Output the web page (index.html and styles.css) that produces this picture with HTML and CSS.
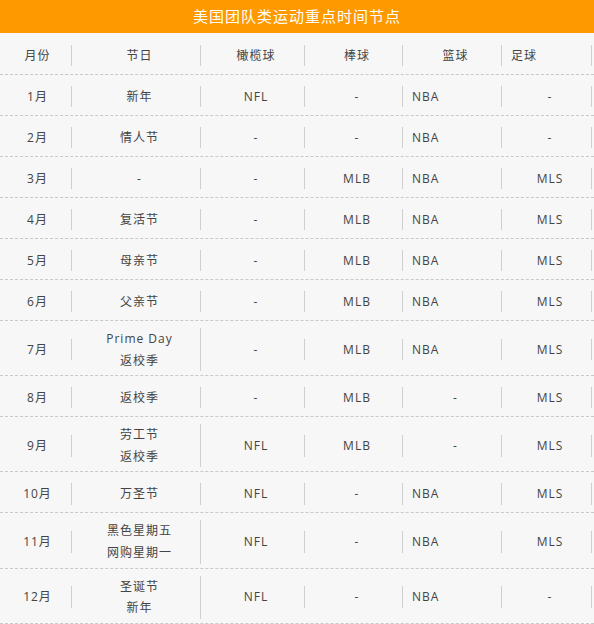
FILE: index.html
```html
<!DOCTYPE html>
<html lang="zh-CN">
<head>
<meta charset="utf-8">
<title>美国团队类运动重点时间节点</title>
<link rel="stylesheet" href="styles.css">
</head>
<body>
<div class="title">美国团队类运动重点时间节点</div>
<div class="table">
  <div class="row head">
    <div class="cell"><div class="in">月份</div></div>
    <div class="cell"><div class="in">节日</div></div>
    <div class="cell"><div class="in">橄榄球</div></div>
    <div class="cell"><div class="in">棒球</div></div>
    <div class="cell"><div class="in">篮球</div></div>
    <div class="cell"><div class="in left">足球</div></div>
  </div>
  <div class="row">
    <div class="cell"><div class="in">1月</div></div>
    <div class="cell"><div class="in">新年</div></div>
    <div class="cell"><div class="in">NFL</div></div>
    <div class="cell"><div class="in">-</div></div>
    <div class="cell"><div class="in left">NBA</div></div>
    <div class="cell"><div class="in">-</div></div>
  </div>
  <div class="row">
    <div class="cell"><div class="in">2月</div></div>
    <div class="cell"><div class="in">情人节</div></div>
    <div class="cell"><div class="in">-</div></div>
    <div class="cell"><div class="in">-</div></div>
    <div class="cell"><div class="in left">NBA</div></div>
    <div class="cell"><div class="in">-</div></div>
  </div>
  <div class="row">
    <div class="cell"><div class="in">3月</div></div>
    <div class="cell"><div class="in">-</div></div>
    <div class="cell"><div class="in">-</div></div>
    <div class="cell"><div class="in">MLB</div></div>
    <div class="cell"><div class="in left">NBA</div></div>
    <div class="cell"><div class="in">MLS</div></div>
  </div>
  <div class="row">
    <div class="cell"><div class="in">4月</div></div>
    <div class="cell"><div class="in">复活节</div></div>
    <div class="cell"><div class="in">-</div></div>
    <div class="cell"><div class="in">MLB</div></div>
    <div class="cell"><div class="in left">NBA</div></div>
    <div class="cell"><div class="in">MLS</div></div>
  </div>
  <div class="row">
    <div class="cell"><div class="in">5月</div></div>
    <div class="cell"><div class="in">母亲节</div></div>
    <div class="cell"><div class="in">-</div></div>
    <div class="cell"><div class="in">MLB</div></div>
    <div class="cell"><div class="in left">NBA</div></div>
    <div class="cell"><div class="in">MLS</div></div>
  </div>
  <div class="row">
    <div class="cell"><div class="in">6月</div></div>
    <div class="cell"><div class="in">父亲节</div></div>
    <div class="cell"><div class="in">-</div></div>
    <div class="cell"><div class="in">MLB</div></div>
    <div class="cell"><div class="in left">NBA</div></div>
    <div class="cell"><div class="in">MLS</div></div>
  </div>
  <div class="row">
    <div class="cell"><div class="in">7月</div></div>
    <div class="cell"><div class="in">Prime Day<br>返校季</div></div>
    <div class="cell"><div class="in">-</div></div>
    <div class="cell"><div class="in">MLB</div></div>
    <div class="cell"><div class="in left">NBA</div></div>
    <div class="cell"><div class="in">MLS</div></div>
  </div>
  <div class="row">
    <div class="cell"><div class="in">8月</div></div>
    <div class="cell"><div class="in">返校季</div></div>
    <div class="cell"><div class="in">-</div></div>
    <div class="cell"><div class="in">MLB</div></div>
    <div class="cell"><div class="in">-</div></div>
    <div class="cell"><div class="in">MLS</div></div>
  </div>
  <div class="row">
    <div class="cell"><div class="in">9月</div></div>
    <div class="cell"><div class="in">劳工节<br>返校季</div></div>
    <div class="cell"><div class="in">NFL</div></div>
    <div class="cell"><div class="in">MLB</div></div>
    <div class="cell"><div class="in">-</div></div>
    <div class="cell"><div class="in">MLS</div></div>
  </div>
  <div class="row">
    <div class="cell"><div class="in">10月</div></div>
    <div class="cell"><div class="in">万圣节</div></div>
    <div class="cell"><div class="in">NFL</div></div>
    <div class="cell"><div class="in">-</div></div>
    <div class="cell"><div class="in left">NBA</div></div>
    <div class="cell"><div class="in">MLS</div></div>
  </div>
  <div class="row">
    <div class="cell"><div class="in">11月</div></div>
    <div class="cell"><div class="in">黑色星期五<br>网购星期一</div></div>
    <div class="cell"><div class="in">NFL</div></div>
    <div class="cell"><div class="in">-</div></div>
    <div class="cell"><div class="in left">NBA</div></div>
    <div class="cell"><div class="in">MLS</div></div>
  </div>
  <div class="row last">
    <div class="cell"><div class="in">12月</div></div>
    <div class="cell"><div class="in">圣诞节<br>新年</div></div>
    <div class="cell"><div class="in">NFL</div></div>
    <div class="cell"><div class="in">-</div></div>
    <div class="cell"><div class="in left">NBA</div></div>
    <div class="cell"><div class="in">-</div></div>
  </div>
</div>
</body>
</html>
```

FILE: styles.css
```css
html, body {
  margin: 0;
  padding: 0;
  background: #f7f7f7;
}

body {
  font-family: "Open Sans", "Noto Sans CJK SC", sans-serif;
  color: #444444;
  width: 594px;
}

.title {
  height: 33px;
  line-height: 32px;
  background: #fe9a00;
  color: #ffffff;
  font-size: 15px;
  letter-spacing: 1px;
  text-align: center;
}

.table {
  display: flex;
  flex-direction: column;
}

.row {
  display: grid;
  grid-template-columns: 75px 129px 104px 98px 99px 89px;
  align-items: center;
  box-sizing: border-box;
  min-height: 41px;
  padding: 7px 0 4px;
  border-top: 1px dashed #c9c9c9;
}

.row.head {
  border-top: none;
  min-height: 41px;
  padding: 8px 0 4px;
}

.row.last {
  border-bottom: 1px dashed #c9c9c9;
}

.cell {
  padding: 0 3px 0 4px;
}

.cell:last-child {
  padding-right: 2px;
}

.in {
  border-right: 1px solid #cfcfcf;
  font-size: 12px;
  line-height: 21.6px;
  letter-spacing: 1px;
  text-align: center;
}

.in.left {
  text-align: left;
  text-indent: 2px;
}
```
